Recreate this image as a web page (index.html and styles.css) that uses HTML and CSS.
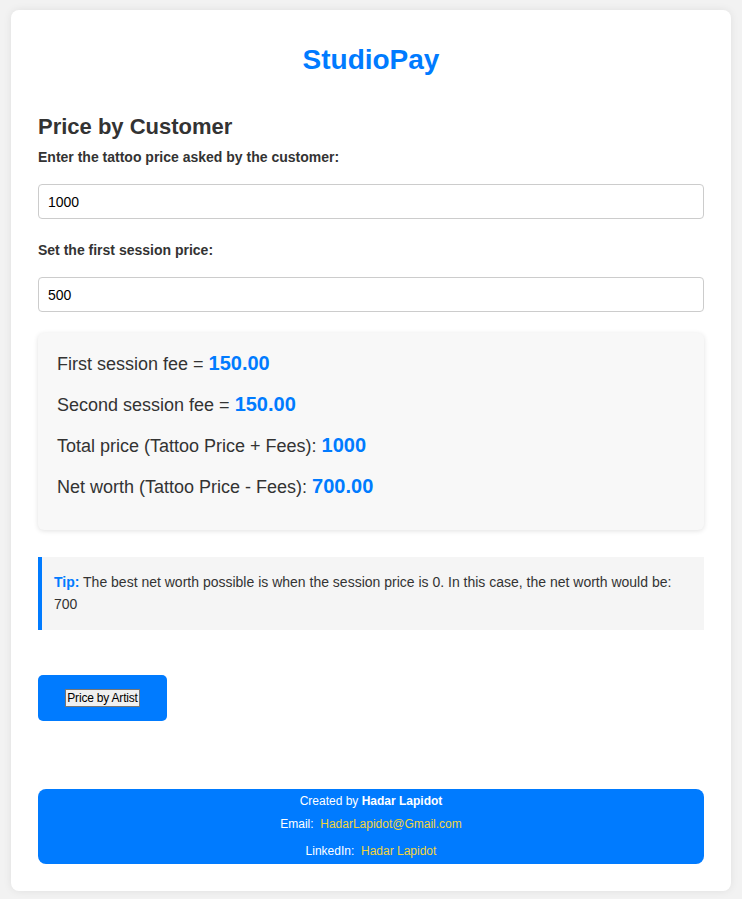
FILE: index.html
```html
<!DOCTYPE html>
<html>
<head>
<meta charset="utf-8">
<title>StudioPay</title>
<link rel="stylesheet" href="styles.css">
</head>
<body>
<div class="card">
  <h1 class="title">StudioPay</h1>
  <h2 class="section-title">Price by Customer</h2>
  <label class="field-label" for="price">Enter the tattoo price asked by the customer:</label>
  <input class="field-input" id="price" type="text" value="1000">
  <label class="field-label second" for="session">Set the first session price:</label>
  <input class="field-input" id="session" type="text" value="500">

  <div class="results">
    <p class="result-line">First session fee = <span class="value">150.00</span></p>
    <p class="result-line">Second session fee = <span class="value">150.00</span></p>
    <p class="result-line">Total price (Tattoo Price + Fees): <span class="value">1000</span></p>
    <p class="result-line">Net worth (Tattoo Price - Fees): <span class="value">700.00</span></p>
  </div>

  <div class="tip">
    <span class="tip-label">Tip:</span> The best net worth possible is when the session price is 0. In this case, the net worth would be: 700
  </div>

  <div class="nav-row">
    <a class="nav-btn" href="#"><button class="inner-btn" type="button">Price by Artist</button></a>
  </div>

  <footer class="footer">
    <p class="footer-line first">Created by <strong>Hadar Lapidot</strong></p>
    <p class="footer-line mid">Email:&nbsp; <a class="footer-link" href="#">HadarLapidot@Gmail.com</a></p>
    <p class="footer-line last">LinkedIn:&nbsp; <a class="footer-link" href="#">Hadar Lapidot</a></p>
  </footer>
</div>
</body>
</html>
```

FILE: styles.css
```css
* { box-sizing: border-box; }

body {
  margin: 0;
  padding: 10px 0 8px;
  background: #f2f2f2;
  font-family: "Liberation Sans", Arial, sans-serif;
  color: #333;
}

.card {
  max-width: 720px;
  margin: 0 auto;
  background: #fff;
  border-radius: 8px;
  box-shadow: 0 0 8px rgba(0,0,0,0.08);
  padding: 20px 27px 27px;
  display: flex;
  flex-direction: column;
}

.title {
  margin: 14px 0 0;
  text-align: center;
  color: #007bff;
  font-size: 28px;
  line-height: 32px;
  font-weight: bold;
}

.section-title {
  margin: 38px 0 9px;
  font-size: 22px;
  line-height: 26px;
  font-weight: bold;
  color: #333;
}

.field-label {
  display: block;
  font-size: 14px;
  line-height: 16px;
  font-weight: bold;
  color: #333;
  margin-bottom: 19px;
}

.field-label.second { margin-top: 23px; }

.field-input {
  display: block;
  width: 100%;
  height: 35px;
  padding: 0 9px;
  border: 1px solid #ccc;
  border-radius: 4px;
  font-family: "Liberation Sans", Arial, sans-serif;
  font-size: 14px;
  color: #000;
  background: #fff;
}

.results {
  margin-top: 21px;
  background: #f8f8f8;
  border-radius: 6px;
  box-shadow: 0 1px 5px rgba(0,0,0,0.12);
  padding: 20px 19px 13px;
}

.result-line {
  margin: 0 0 19px;
  font-size: 18px;
  line-height: 22px;
  height: 22px;
  color: #333;
}

.value {
  color: #007bff;
  font-weight: bold;
  font-size: 20px;
  line-height: 1;
}

.tip {
  margin-top: 27px;
  background: #f5f5f5;
  border-left: 4px solid #007bff;
  padding: 14px 12px 15px;
  font-size: 14px;
  line-height: 22px;
  color: #333;
}

.tip-label {
  color: #007bff;
  font-weight: bold;
}

.nav-row {
  margin-top: 45px;
  display: flex;
}

.nav-btn {
  display: flex;
  align-items: center;
  justify-content: center;
  width: 129px;
  height: 46px;
  background: #007bff;
  border-radius: 5px;
  text-decoration: none;
}

.inner-btn {
  font-family: "Liberation Sans", Arial, sans-serif;
  font-size: 12px;
  line-height: 14px;
  padding: 1px 1px;
  background: #f0f0f0;
  color: #000;
  border: 1px solid #767676;
  border-radius: 0;
  letter-spacing: -0.2px;
}

.footer {
  margin-top: 68px;
  background: #007bff;
  border-radius: 8px;
  padding: 5px 0 5px;
  text-align: center;
  color: #fff;
  font-size: 12px;
}

.footer-line { margin: 0; }
.footer-line.first { line-height: 14px; }
.footer-line.mid { margin-top: 8px; line-height: 16px; }
.footer-line.last { margin-top: 11px; line-height: 16px; }

.footer-link {
  color: #f2d43c;
  text-decoration: none;
}
```
